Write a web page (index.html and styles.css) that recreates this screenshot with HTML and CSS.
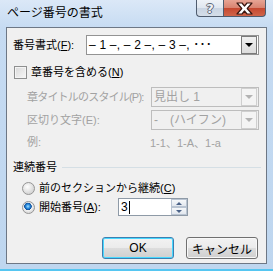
FILE: index.html
```html
<!DOCTYPE html>
<html lang="ja">
  <head>
    <meta charset="UTF-8" />
    <title>ページ番号の書式</title>
    <link rel="stylesheet" href="styles.css">
  </head>
  <body>
    <div class="window">

      <!-- Barra de título -->
      <div class="titlebar">
        <span class="title">ページ番号の書式</span>
        <div class="captionButtons">
          <div class="helpButton">?</div>
          <div class="closeButton">
            <svg class="closeIcon" xmlns="http://www.w3.org/2000/svg" viewBox="0 0 19 13">
              <path d="M2 1 L7 1 L9.5 4 L12 1 L17 1 L12.2 6.5 L17 12 L12 12 L9.5 9 L7 12 L2 12 L6.8 6.5 Z"
                fill="#ffffff" stroke="#3a1610" stroke-width="1.2" stroke-linejoin="round" />
            </svg>
          </div>
        </div>
      </div>

      <div class="client">
        <div class="row rowFormat">
          <span class="label labelFormat">番号書式(<u>F</u>):</span>
          <div class="combo comboFormat">
            <span class="comboText">– 1 –, – 2 –, – 3 –, ･･･</span>
            <span class="dropButton"><i class="arrow"></i></span>
          </div>
        </div>

        <div class="row rowCheck">
          <span class="checkbox"></span>
          <span class="label">章番号を含める(<u>N</u>)</span>
        </div>

        <div class="row rowStyle disabled">
          <span class="label labelIndent labelNarrow">章タイトルのスタイル(P):</span>
          <div class="combo comboSmall">
            <span class="comboText">見出し 1</span>
            <span class="dropButton"><i class="arrow"></i></span>
          </div>
        </div>

        <div class="row rowSeparator disabled">
          <span class="label labelIndent">区切り文字(E):</span>
          <div class="combo comboSmall">
            <span class="comboText">-　(ハイフン)</span>
            <span class="dropButton"><i class="arrow"></i></span>
          </div>
        </div>

        <div class="row rowExample disabled">
          <span class="label labelIndent">例:</span>
          <span class="exampleText">1-1、1-A、1-a</span>
        </div>

        <div class="row rowGroup">
          <span class="label">連続番号</span>
          <span class="groupLine"></span>
        </div>

        <div class="row rowRadio">
          <span class="radio"></span>
          <span class="label">前のセクションから継続(<u>C</u>)</span>
        </div>

        <div class="row rowRadio2">
          <span class="radio checked"></span>
          <span class="label labelStart">開始番号(<u>A</u>):</span>
          <div class="spin">
            <span class="spinText">3<i class="caret"></i></span>
            <span class="spinButtons">
              <span class="spinButton"><i class="spinUp"></i></span>
              <span class="spinButton"><i class="spinDown"></i></span>
            </span>
          </div>
        </div>

        <div class="row rowButtons">
          <button class="button defaultButton">OK</button>
          <button class="button">キャンセル</button>
        </div>
      </div>
    </div>
  </body>
</html>
```

FILE: styles.css
```css
* {
  margin: 0;
  padding: 0;
  box-sizing: border-box;
}

body {
  width: 273px;
  height: 271px;
  overflow: hidden;
  font-family: "Liberation Sans", "Noto Sans CJK JP", sans-serif;
  font-size: 11px;
  color: #000;
  background: #c4daf2;
}

u {
  text-decoration: underline;
  text-underline-offset: 1px;
}

.window {
  width: 273px;
  height: 271px;
  display: flex;
  flex-direction: column;
  padding: 0 6px 5px;
  background: linear-gradient(#dbe8f7, #c6dbf2 28px, #bed6ef);
  border-bottom: 2px solid #56c6f1;
}

/* Barra de título */

.titlebar {
  height: 27px;
  display: flex;
  align-items: flex-start;
}

.title {
  font-size: 12px;
  line-height: 14px;
  margin-top: 6px;
  margin-left: 1px;
}

.captionButtons {
  margin-left: auto;
  margin-right: 1px;
  display: flex;
}

.helpButton,
.closeButton {
  height: 17px;
  border: 1px solid #4f5c6e;
  border-top: none;
  display: flex;
  align-items: center;
  justify-content: center;
}

.helpButton {
  width: 27px;
  border-right: none;
  border-radius: 0 0 0 4px;
  background: linear-gradient(#eef2f7, #dfe6ef 50%, #c9d4e2 51%, #d5dee9);
  font-family: "DejaVu Sans", sans-serif;
  font-size: 13px;
  font-weight: bold;
  color: #eef2f6;
  text-shadow: -1px 0 #5d6675, 1px 0 #5d6675, 0 -1px #5d6675, 0 1px #5d6675;
  line-height: 13px;
}

.closeButton {
  width: 43px;
  border-radius: 0 0 4px 0;
  background: linear-gradient(#e7a494, #d8826f 50%, #c5472f 51%, #d0654a);
}

.closeIcon {
  display: block;
  width: 19px;
  height: 13px;
  flex: none;
}

/* Área cliente */

.client {
  flex: 1;
  background: #f0f0f0;
  border: 1px solid #6d7785;
  padding: 0 7px 0 6px;
  display: flex;
  flex-direction: column;
}

.row {
  display: flex;
  align-items: center;
}

.label {
  line-height: 14px;
  white-space: nowrap;
}

.disabled {
  color: #a2a2a2;
}

.rowFormat {
  margin-top: 7px;
  height: 20px;
}

.labelFormat {
  width: 73px;
}

.rowCheck {
  margin-top: 7px;
  height: 20px;
}

.rowStyle {
  margin-top: 5px;
  height: 20px;
}

.rowSeparator {
  margin-top: 3px;
  height: 20px;
}

.rowExample {
  margin-top: 3px;
  height: 18px;
}

.labelIndent {
  margin-left: 14px;
  width: 124px;
  flex: none;
}

.labelNarrow {
  letter-spacing: -0.8px;
}

.exampleText {
  margin-left: -1px;
}

.rowGroup {
  margin-top: 7px;
  height: 18px;
}

.groupLine {
  flex: 1;
  height: 1px;
  background: #d5dfe5;
  margin-left: 5px;
  margin-right: -2px;
}

.rowRadio {
  margin-top: 3px;
  height: 18px;
}

.rowRadio2 {
  margin-top: 1px;
  height: 18px;
}

.labelStart {
  width: 79px;
}

.rowButtons {
  margin-top: 21px;
  justify-content: flex-end;
  gap: 12px;
  margin-right: 1px;
}

/* Combos */

.combo {
  flex: 1;
  height: 20px;
  border: 1px solid #939393;
  background: #fff;
  display: flex;
  align-items: center;
  padding: 0 1px 0 2px;
}

.comboText {
  flex: 1;
  line-height: 14px;
  white-space: nowrap;
}

.comboFormat .comboText {
  font-size: 12px;
  letter-spacing: 0.2px;
}

.comboSmall .comboText {
  font-size: 12px;
}

.dropButton {
  width: 16px;
  height: 18px;
  border: 1px solid #7a7a7a;
  background: linear-gradient(#f0f0f0, #dcdcdc);
  display: flex;
  align-items: center;
  justify-content: center;
}

.arrow {
  width: 0;
  height: 0;
  border-left: 4px solid transparent;
  border-right: 4px solid transparent;
  border-top: 4px solid #000;
}

.disabled .combo {
  background: #f0f0f0;
  border-color: #bdbdbd;
}

.disabled .dropButton {
  border-color: #cfcfcf;
  background: #f4f4f4;
}

.disabled .arrow {
  border-top-color: #b3b3b3;
}

/* Casilla y radio */

.checkbox {
  width: 13px;
  height: 13px;
  border: 1px solid #8e8f8f;
  background: linear-gradient(135deg, #d8d8d8, #f8f8f8);
  box-shadow: inset 0 0 0 1px #f4f4f4;
  margin: 0 4px 0 1px;
}

.radio {
  width: 13px;
  height: 13px;
  border-radius: 50%;
  border: 1px solid #959595;
  background: radial-gradient(circle at 40% 35%, #ffffff, #d6d6d6 70%);
  margin: 0 4px 0 9px;
}

.radio.checked {
  background: radial-gradient(circle at 45% 40%, #a6e0ff 0, #2b8ee0 2px, #0d4e9a 3.5px, #f2f2f2 4px, #dddddd 6px);
}

/* Spin */

.spin {
  width: 70px;
  height: 18px;
  border: 1px solid #8e9aa7;
  background: #fff;
  display: flex;
}

.spinText {
  flex: 1;
  padding-left: 2px;
  font-size: 12px;
  line-height: 16px;
  display: flex;
  align-items: center;
}

.caret {
  width: 1px;
  height: 13px;
  background: #000;
  margin-left: 1px;
}

.spinButtons {
  width: 16px;
  display: flex;
  flex-direction: column;
}

.spinButton {
  flex: 1;
  border: 1px solid #b9c4d2;
  background: linear-gradient(#f6f8fa, #e2e7ee);
  display: flex;
  align-items: center;
  justify-content: center;
}

.spinUp,
.spinDown {
  width: 0;
  height: 0;
  border-left: 3px solid transparent;
  border-right: 3px solid transparent;
}

.spinUp {
  border-bottom: 3px solid #4b6288;
}

.spinDown {
  border-top: 3px solid #4b6288;
}

/* Botones */

.button {
  width: 72px;
  height: 22px;
  border: 1px solid #707070;
  border-radius: 3px;
  background: linear-gradient(#f2f2f2, #ebebeb 50%, #dddddd 51%, #cfcfcf);
  box-shadow: inset 0 0 0 1px #f8f8f8;
  font-family: "Liberation Sans", "Noto Sans CJK JP", sans-serif;
  font-size: 12px;
  color: #000;
}

.defaultButton {
  border-color: #3c7fb1;
  box-shadow: inset 0 0 0 1px #48d8ff;
}
```
